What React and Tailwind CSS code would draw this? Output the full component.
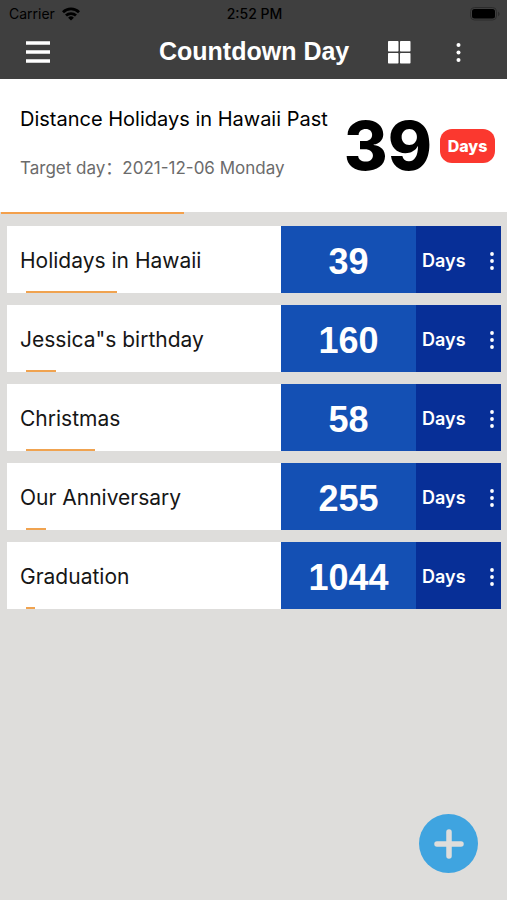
const events = [
  { name: 'Holidays in Hawaii', days: 39, bar: 91 },
  { name: 'Jessica"s birthday', days: 160, bar: 30 },
  { name: 'Christmas', days: 58, bar: 69 },
  { name: 'Our Anniversary', days: 255, bar: 20 },
  { name: 'Graduation', days: 1044, bar: 9 },
];

function Dots({ className }) {
  return (
    <svg viewBox="0 0 4 18" className={className} fill="currentColor" aria-hidden="true">
      <circle cx="2" cy="2" r="1.9" />
      <circle cx="2" cy="9" r="1.9" />
      <circle cx="2" cy="16" r="1.9" />
    </svg>
  );
}

function StatusBar() {
  return (
    <div className="grid h-[27px] grid-cols-3 items-center pr-[7px] pl-[9px] text-[14px] text-black">
      <div className="flex items-center gap-[7px]">
        <span>Carrier</span>
        <svg viewBox="0 0 18 14" className="h-[14px] w-[18px]" aria-hidden="true">
          <g fill="none" stroke="black" strokeWidth="2.8">
            <path d="M1 5.2a11.4 11.4 0 0 1 16 0" />
            <path d="M4 8.6a7.2 7.2 0 0 1 10 0" />
          </g>
          <path d="M9 13.6 6.1 10.7a4.1 4.1 0 0 1 5.8 0z" fill="black" />
        </svg>
      </div>
      <span className="text-center font-medium">2:52 PM</span>
      <svg viewBox="0 0 30 14" className="h-[14px] w-[30px] justify-self-end" aria-hidden="true">
        <rect x="0.5" y="0.5" width="26" height="12.5" rx="4" fill="none" stroke="#2c2c2c" />
        <rect x="2" y="2" width="23" height="9.5" rx="2.5" fill="black" />
        <path d="M28 4.8v4.4c1-.4 1.6-1.2 1.6-2.2s-.6-1.8-1.6-2.2z" fill="#2c2c2c" />
      </svg>
    </div>
  );
}

function EventRow({ event }) {
  return (
    <li className="flex h-[67px]">
      <div className="flex min-w-0 flex-1 flex-col bg-white">
        <div className="flex flex-1 items-center pt-[4px] pl-[13px] text-[21px] text-[#161616]">{event.name}</div>
        <div className="ml-[19px] h-[2px] bg-[#f0a350]" style={{ width: event.bar }} />
      </div>
      <div className="flex w-[135px] items-center justify-center bg-[#1450b4] pt-[4px] font-['Liberation_Sans',Arial,sans-serif] text-[36px] font-bold text-white">
        {event.days}
      </div>
      <div className="flex w-[85px] items-center justify-between bg-[#072f97] pt-[2px] pl-[6px] text-white">
        <span className="text-[18px] font-semibold">Days</span>
        <button type="button" aria-label={`Options for ${event.name}`} className="flex h-full w-[19px] items-center justify-center">
          <Dots className="h-[18px] w-[4px]" />
        </button>
      </div>
    </li>
  );
}

export default function App() {
  return (
    <div className="relative flex min-h-screen flex-col bg-[#dedddb] font-[Inter,'Noto_Sans_CJK_SC',sans-serif]">
      <header className="bg-[#3f3f3f]">
        <StatusBar />
        <div className="flex h-[52px] items-center pr-[41px] pb-[2px] pl-[25px] text-white">
          <button type="button" aria-label="Menu" className="flex">
            <svg viewBox="0 0 26 24" className="h-[24px] w-[26px]" fill="currentColor" aria-hidden="true">
              <path d="M1 1.2h24v3.6H1zM1 10.2h24v3.6H1zM1 19.2h24v3.6H1z" />
            </svg>
          </button>
          <h1 className="ml-[108px] flex-1 pb-[2px] font-['Liberation_Sans',Arial,sans-serif] text-[25px] leading-[30px] font-bold whitespace-nowrap">
            Countdown Day
          </h1>
          <button type="button" aria-label="Grid view" className="mr-[39px] flex">
            <svg viewBox="0 0 24 24" className="h-[24px] w-[24px]" fill="currentColor" aria-hidden="true">
              <rect x="1" y="1" width="10.5" height="10.5" rx="0.7" />
              <rect x="13" y="1" width="10.5" height="10.5" rx="0.7" />
              <rect x="1" y="13" width="10.5" height="10.5" rx="0.7" />
              <rect x="13" y="13" width="10.5" height="10.5" rx="0.7" />
            </svg>
          </button>
          <button type="button" aria-label="More options" className="flex w-[16px] justify-center">
            <Dots className="h-[19px] w-[5px]" />
          </button>
        </div>
      </header>

      <section className="bg-white">
        <div className="flex h-[133px] items-center justify-between pr-[12px] pl-[20px]">
          <div className="pb-[5px]">
            <h2 className="text-[20px] leading-[24px] whitespace-nowrap text-black">Distance Holidays in Hawaii Past</h2>
            <p className="mt-[25px] text-[17px] leading-[24px] whitespace-nowrap text-[#6b6b6b]">Target day：2021-12-06 Monday</p>
          </div>
          <div className="flex items-center gap-[8px]">
            <span className="text-[67px] leading-[80px] font-extrabold text-black">39</span>
            <span className="flex h-[34px] w-[55px] items-center justify-center rounded-[12px] bg-[#fb382f] text-[16px] font-extrabold text-white">
              Days
            </span>
          </div>
        </div>
      </section>
      <div className="ml-[1px] h-[2px] w-[36%] bg-[#f3a04c]" />

      <ul className="mt-[12px] flex flex-col gap-[12px] pr-[6px] pl-[7px]">
        {events.map((event) => (
          <EventRow key={event.name} event={event} />
        ))}
      </ul>

      <button
        type="button"
        aria-label="Add countdown"
        className="fixed right-[29px] bottom-[27px] flex h-[59px] w-[59px] items-center justify-center rounded-full bg-[#3fa4e0]"
      >
        <svg viewBox="0 0 30 30" className="h-[30px] w-[30px]" fill="none" stroke="#dedddb" strokeWidth="5.5" strokeLinecap="round" aria-hidden="true">
          <path d="M15 3v24M3 15h24" />
        </svg>
      </button>
    </div>
  );
}
